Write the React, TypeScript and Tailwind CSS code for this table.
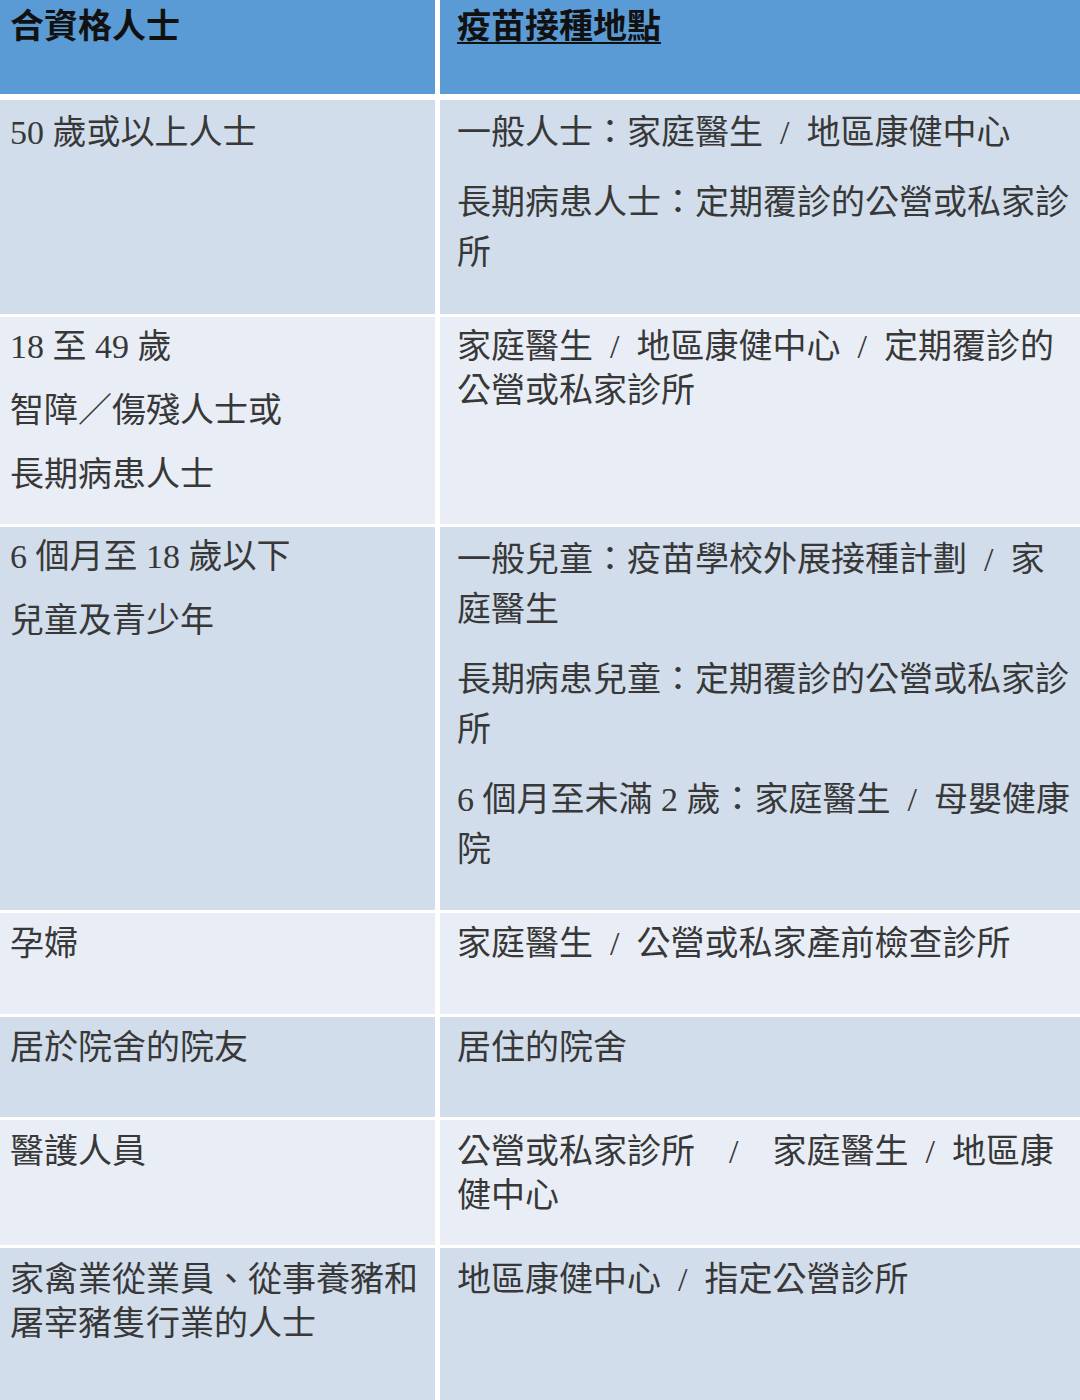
const FONT = "font-['Liberation_Serif','Noto_Sans_CJK_TC',serif]";

interface Para {
  lines: string[];
  lh: string;
}

interface Row {
  h: string;
  bg: string;
  pt: string;
  left: Para[];
  right: Para[];
}

const DARK = "bg-[#d1ddeb]";
const LIGHT = "bg-[#e9eef6]";

const ROWS: Row[] = [
  {
    h: "h-[214px]",
    bg: DARK,
    pt: "pt-[8px]",
    left: [{ lines: ["50 歲或以上人士"], lh: "leading-[50px]" }],
    right: [
      { lines: ["一般人士：家庭醫生  /  地區康健中心"], lh: "leading-[50px]" },
      { lines: ["長期病患人士：定期覆診的公營或私家診", "所"], lh: "leading-[50px]" },
    ],
  },
  {
    h: "h-[207px]",
    bg: LIGHT,
    pt: "pt-[8px]",
    left: [
      { lines: ["18 至 49 歲"], lh: "leading-[44px]" },
      { lines: ["智障／傷殘人士或"], lh: "leading-[44px]" },
      { lines: ["長期病患人士"], lh: "leading-[44px]" },
    ],
    right: [
      { lines: ["家庭醫生  /  地區康健中心  /  定期覆診的", "公營或私家診所"], lh: "leading-[44px]" },
    ],
  },
  {
    h: "h-[383px]",
    bg: DARK,
    pt: "pt-[8px]",
    left: [
      { lines: ["6 個月至 18 歲以下"], lh: "leading-[44px]" },
      { lines: ["兒童及青少年"], lh: "leading-[44px]" },
    ],
    right: [
      { lines: ["一般兒童：疫苗學校外展接種計劃  /  家", "庭醫生"], lh: "leading-[50px]" },
      { lines: ["長期病患兒童：定期覆診的公營或私家診", "所"], lh: "leading-[50px]" },
      { lines: ["6 個月至未滿 2 歲：家庭醫生  /  母嬰健康", "院"], lh: "leading-[50px]" },
    ],
  },
  {
    h: "h-[101px]",
    bg: LIGHT,
    pt: "pt-[9px]",
    left: [{ lines: ["孕婦"], lh: "leading-[44px]" }],
    right: [{ lines: ["家庭醫生  /  公營或私家產前檢查診所"], lh: "leading-[44px]" }],
  },
  {
    h: "h-[100px]",
    bg: DARK,
    pt: "pt-[9px]",
    left: [{ lines: ["居於院舍的院友"], lh: "leading-[44px]" }],
    right: [{ lines: ["居住的院舍"], lh: "leading-[44px]" }],
  },
  {
    h: "h-[125px]",
    bg: LIGHT,
    pt: "pt-[10px]",
    left: [{ lines: ["醫護人員"], lh: "leading-[44px]" }],
    right: [
      { lines: ["公營或私家診所    /    家庭醫生  /  地區康", "健中心"], lh: "leading-[44px]" },
    ],
  },
  {
    h: "h-[152px]",
    bg: DARK,
    pt: "pt-[10px]",
    left: [{ lines: ["家禽業從業員、從事養豬和", "屠宰豬隻行業的人士"], lh: "leading-[44px]" }],
    right: [{ lines: ["地區康健中心  /  指定公營診所"], lh: "leading-[44px]" }],
  },
];

function Cell({ paras, pad }: { paras: Para[]; pad: string }) {
  return (
    <div className={`flex flex-col gap-[20px] ${pad}`}>
      {paras.map((p, i) => (
        <div key={i} className={p.lh}>
          {p.lines.map((l, j) => (
            <div key={j} className="whitespace-pre">
              {l}
            </div>
          ))}
        </div>
      ))}
    </div>
  );
}

export default function App() {
  return (
    <div className={`w-[1080px] h-[1400px] overflow-hidden bg-white text-[34px] text-[#383838] ${FONT}`}>
      <div className="flex flex-col gap-[3px]">
        {/* Header */}
        <div className="grid grid-cols-[435px_1fr] gap-x-[5px] h-[94px] mb-[3px]">
          <div className="bg-[#5b9bd5] pl-[10px] pt-[5px] leading-[44px] font-bold text-[#111]">合資格人士</div>
          <div className="bg-[#5b9bd5] pl-[17px] pt-[5px] leading-[44px] font-bold text-[#111] underline decoration-2 underline-offset-4">
            疫苗接種地點
          </div>
        </div>

        {ROWS.map((r, i) => (
          <div key={i} className={`grid grid-cols-[435px_1fr] gap-x-[5px] ${r.h}`}>
            <div className={`${r.bg} ${r.pt}`}>
              <Cell paras={r.left} pad="pl-[10px]" />
            </div>
            <div className={`${r.bg} ${r.pt}`}>
              <Cell paras={r.right} pad="pl-[17px]" />
            </div>
          </div>
        ))}
      </div>
    </div>
  );
}
